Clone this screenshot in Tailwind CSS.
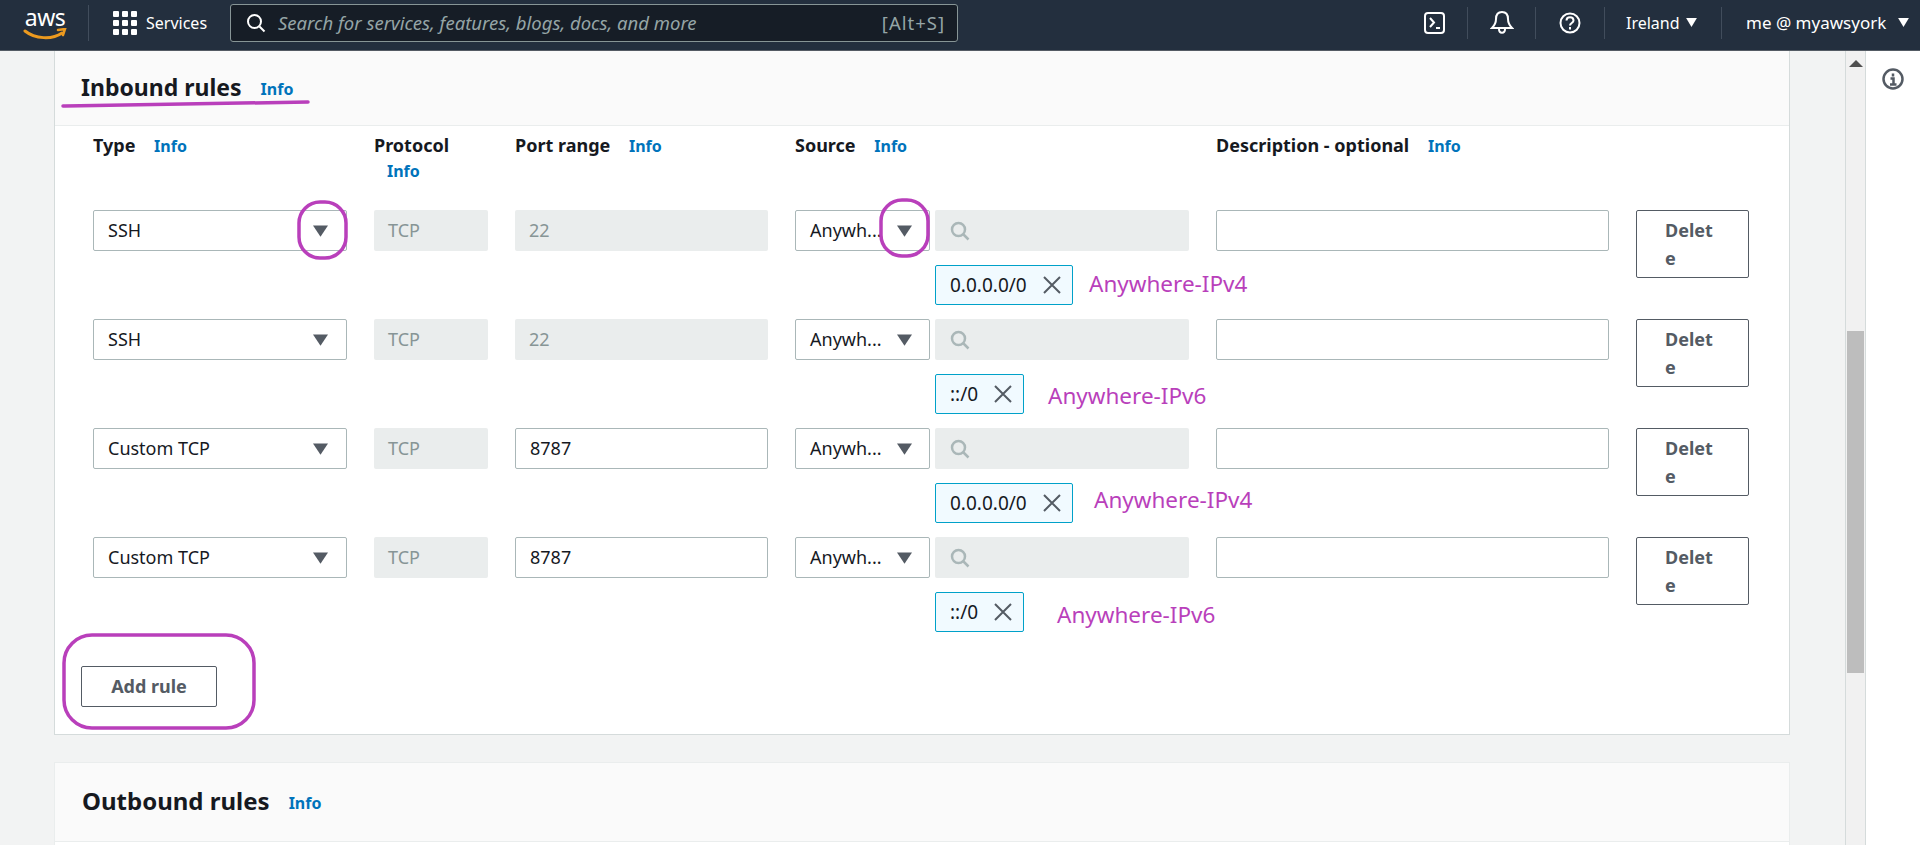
<!DOCTYPE html>
<html lang="en">
<head>
    <meta charset="UTF-8">
    <title>Inbound rules</title>
    <script src="https://cdn.jsdelivr.net/npm/@tailwindcss/browser@4"></script>
</head>
<body class="h-[845px] w-[1920px] overflow-hidden bg-[#f2f3f3] font-['Noto_Sans',sans-serif] text-[#16191f] relative">
    <!-- top nav -->
    <header class="h-[51px] bg-[#232f3e] border-b border-[#545b64] flex items-center pb-[5px] text-white">
        <div class="w-[89px] h-[36px] flex justify-center border-r border-[#414d5c] shrink-0">
            <div class="relative w-[44px] h-[36px] ml-[2px] text-center text-[23px] leading-[24px] tracking-[-0.5px]">aws
                <svg class="absolute left-0 top-[23px]" width="44" height="14" viewBox="0 0 44 14" fill="none"><path d="M2 3c10 8 27 9 37 2" stroke="#ec9a1f" stroke-width="3" stroke-linecap="round"/><path d="M35 2l7-1-2 6" stroke="#ec9a1f" stroke-width="2.5" stroke-linecap="round"/></svg>
            </div>
        </div>
        <svg class="ml-[24px] shrink-0" width="24" height="24" viewBox="0 0 24 24" fill="#fff">
            <rect x="0" y="0" width="6" height="6" rx="1"/><rect x="9" y="0" width="6" height="6" rx="1"/><rect x="18" y="0" width="6" height="6" rx="1"/>
            <rect x="0" y="9" width="6" height="6" rx="1"/><rect x="9" y="9" width="6" height="6" rx="1"/><rect x="18" y="9" width="6" height="6" rx="1"/>
            <rect x="0" y="18" width="6" height="6" rx="1"/><rect x="9" y="18" width="6" height="6" rx="1"/><rect x="18" y="18" width="6" height="6" rx="1"/>
        </svg>
        <span class="ml-[9px] w-[84px] text-[16px] shrink-0 whitespace-nowrap">Services</span>
        <div class="w-[728px] h-[38px] bg-[#161d26] border border-[#879596] rounded-[3px] flex items-center pl-[15px] pr-[12px] shrink-0">
            <svg width="20" height="20" viewBox="0 0 20 20" fill="none" stroke="#fff" stroke-width="2"><circle cx="8.5" cy="8.5" r="6.5"/><path d="M13.5 13.5l5 5"/></svg>
            <span class="ml-[12px] text-[18.5px] italic text-[#95a5a6] flex-1 whitespace-nowrap">Search for services, features, blogs, docs, and more</span>
            <span class="text-[18.5px] tracking-[1px] text-[#95a5a6] whitespace-nowrap">[Alt+S]</span>
        </div>
        <svg class="ml-[466px] shrink-0" width="21" height="24" viewBox="0 0 21 24" fill="none" stroke="#fff" stroke-width="2"><rect x="1" y="2" width="19" height="20" rx="3"/><path d="M6 7l4 4.5L6 16M12 17h4"/></svg>
        <div class="ml-[22px] w-px h-[32px] bg-[#414d5c]"></div>
        <svg class="ml-[22px] shrink-0" width="24" height="26" viewBox="0 0 24 26" fill="none" stroke="#fff" stroke-width="2"><path d="M12 2c-4 0-6 3-6 7 0 5-2 7-4 9h20c-2-2-4-4-4-9 0-4-2-7-6-7z"/><path d="M9 19c0 5 6 5 6 0"/></svg>
        <div class="ml-[21px] w-px h-[32px] bg-[#414d5c]"></div>
        <svg class="ml-[23px] shrink-0" width="22" height="22" viewBox="0 0 22 22" fill="none" stroke="#fff" stroke-width="2"><circle cx="11" cy="11" r="9.500"/><path d="M7.500 8.500c0-4.500 7-4.500 7 0 0 2.500-3.500 2.500-3.500 5"/><path d="M11 15v2.500"/></svg>
        <div class="ml-[23px] w-px h-[32px] bg-[#414d5c]"></div>
        <span class="ml-[21px] text-[16px] w-[52px] shrink-0">Ireland</span>
        <svg class="ml-[8px] shrink-0" width="11" height="9" viewBox="0 0 12 10" fill="#fff"><path d="M0 0h12L6 10z"/></svg>
        <div class="ml-[24px] w-px h-[32px] bg-[#414d5c]"></div>
        <span class="ml-[24px] text-[17px] w-[137px] shrink-0 whitespace-nowrap">me @ myawsyork</span>
        <svg class="ml-[15px] shrink-0" width="11" height="9" viewBox="0 0 12 10" fill="#fff"><path d="M0 0h12L6 10z"/></svg>
    </header>

    <div class="flex h-[794px]">
        <main class="w-[1845px] pl-[54px] pr-[55px] shrink-0 overflow-hidden">
            <!-- inbound -->
            <section class="bg-white border-x border-b border-[#d5dbdb] h-[685px] -mt-px">
                <div class="h-[76px] bg-[#fafafa] border-b border-[#eaeded] pl-[26px] pt-[23px] flex items-start">
                    <h2 class="text-[23px] leading-[28px] font-bold">Inbound rules</h2>
                    <a class="ml-[19px] mt-[6px] text-[16px] leading-[20px] font-bold text-[#0073bb]">Info</a>
                </div>
                <div class="pl-[38px]">
                    <div class="grid grid-cols-[254px_114px_253px_394px_393px_113px] gap-x-[27px] h-[84px] pt-[6px] text-[18px] leading-[26px] font-bold">
                        <div>Type <a class="ml-[14px] text-[16px] text-[#0073bb]">Info</a></div>
                        <div>Protocol <div class="ml-[13px] text-[16px] text-[#0073bb]">Info</div></div>
                        <div>Port range <a class="ml-[14px] text-[16px] text-[#0073bb]">Info</a></div>
                        <div>Source <a class="ml-[14px] text-[16px] text-[#0073bb]">Info</a></div>
                        <div class="whitespace-nowrap">Description - optional <a class="ml-[14px] text-[16px] text-[#0073bb]">Info</a></div>
                        <div></div>
                    </div>

                    <!-- row 1 -->
                    <div class="grid grid-cols-[254px_114px_253px_394px_393px_113px] gap-x-[27px] h-[109px] text-[18px]">
                        <div class="h-[41px] bg-white border border-[#aab7b8] rounded-[2px] flex items-center justify-between pl-[14px] pr-[18px]">SSH
                            <svg width="15" height="12" viewBox="0 0 16 12" fill="#545b64"><path d="M0 0h16L8 12z"/></svg></div>
                        <div class="h-[41px] bg-[#eaeded] rounded-[2px] flex items-center pl-[14px] text-[#879596]">TCP</div>
                        <div class="h-[41px] bg-[#eaeded] rounded-[2px] flex items-center pl-[14px] text-[#879596]">22</div>
                        <div>
                            <div class="flex gap-[5px]">
                                <div class="w-[135px] h-[41px] bg-white border border-[#aab7b8] rounded-[2px] flex items-center justify-between pl-[14px] pr-[17px] whitespace-nowrap overflow-hidden">Anywh...
                                    <svg class="shrink-0" width="15" height="12" viewBox="0 0 16 12" fill="#545b64"><path d="M0 0h16L8 12z"/></svg></div>
                                <div class="w-[254px] h-[41px] bg-[#eaeded] rounded-[2px] flex items-center pl-[15px]">
                                    <svg width="20" height="20" viewBox="0 0 20 20" fill="none" stroke="#aab7b8" stroke-width="2.5"><circle cx="8.5" cy="8.500" r="6.500"/><path d="M13.500 13.500l5 5"/></svg></div>
                            </div>
                            <div class="ml-[140px] mt-[14px] flex items-center">
                                <div class="w-[138px] h-[40px] shrink-0 bg-[#f1faff] border border-[#00a1c9] rounded-[2px] flex items-center justify-between pl-[14px] pr-[10px] text-[19px]">0.0.0.0/0
                                    <svg width="20" height="20" viewBox="0 0 20 20" stroke="#545b64" stroke-width="2"><path d="M2 2l16 16M18 2L2 18"/></svg></div>
                                <span class="ml-[16px] -mt-[2px] text-[22.5px] text-[#b93fbb] whitespace-nowrap">Anywhere-IPv4</span>
                            </div>
                        </div>
                        <div class="h-[41px] bg-white border border-[#aab7b8] rounded-[2px]"></div>
                        <div class="h-[68px] border border-[#545b64] rounded-[2px] pl-[28px] pt-[5px] text-[#545b64] font-bold leading-[28px]">Delet<br>e</div>
                    </div>

                    <!-- row 2 -->
                    <div class="grid grid-cols-[254px_114px_253px_394px_393px_113px] gap-x-[27px] h-[109px] text-[18px]">
                        <div class="h-[41px] bg-white border border-[#aab7b8] rounded-[2px] flex items-center justify-between pl-[14px] pr-[18px]">SSH
                            <svg width="15" height="12" viewBox="0 0 16 12" fill="#545b64"><path d="M0 0h16L8 12z"/></svg></div>
                        <div class="h-[41px] bg-[#eaeded] rounded-[2px] flex items-center pl-[14px] text-[#879596]">TCP</div>
                        <div class="h-[41px] bg-[#eaeded] rounded-[2px] flex items-center pl-[14px] text-[#879596]">22</div>
                        <div>
                            <div class="flex gap-[5px]">
                                <div class="w-[135px] h-[41px] bg-white border border-[#aab7b8] rounded-[2px] flex items-center justify-between pl-[14px] pr-[17px] whitespace-nowrap overflow-hidden">Anywh...
                                    <svg class="shrink-0" width="15" height="12" viewBox="0 0 16 12" fill="#545b64"><path d="M0 0h16L8 12z"/></svg></div>
                                <div class="w-[254px] h-[41px] bg-[#eaeded] rounded-[2px] flex items-center pl-[15px]">
                                    <svg width="20" height="20" viewBox="0 0 20 20" fill="none" stroke="#aab7b8" stroke-width="2.5"><circle cx="8.5" cy="8.500" r="6.500"/><path d="M13.500 13.500l5 5"/></svg></div>
                            </div>
                            <div class="ml-[140px] mt-[14px] flex items-center">
                                <div class="w-[89px] h-[40px] shrink-0 bg-[#f1faff] border border-[#00a1c9] rounded-[2px] flex items-center justify-between pl-[14px] pr-[10px] text-[19px]">::/0
                                    <svg width="20" height="20" viewBox="0 0 20 20" stroke="#545b64" stroke-width="2"><path d="M2 2l16 16M18 2L2 18"/></svg></div>
                                <span class="ml-[24px] mt-[4px] text-[22.5px] text-[#b93fbb] whitespace-nowrap">Anywhere-IPv6</span>
                            </div>
                        </div>
                        <div class="h-[41px] bg-white border border-[#aab7b8] rounded-[2px]"></div>
                        <div class="h-[68px] border border-[#545b64] rounded-[2px] pl-[28px] pt-[5px] text-[#545b64] font-bold leading-[28px]">Delet<br>e</div>
                    </div>

                    <!-- row 3 -->
                    <div class="grid grid-cols-[254px_114px_253px_394px_393px_113px] gap-x-[27px] h-[109px] text-[18px]">
                        <div class="h-[41px] bg-white border border-[#aab7b8] rounded-[2px] flex items-center justify-between pl-[14px] pr-[18px]">Custom TCP
                            <svg width="15" height="12" viewBox="0 0 16 12" fill="#545b64"><path d="M0 0h16L8 12z"/></svg></div>
                        <div class="h-[41px] bg-[#eaeded] rounded-[2px] flex items-center pl-[14px] text-[#879596]">TCP</div>
                        <div class="h-[41px] bg-white border border-[#aab7b8] rounded-[2px] flex items-center pl-[14px]">8787</div>
                        <div>
                            <div class="flex gap-[5px]">
                                <div class="w-[135px] h-[41px] bg-white border border-[#aab7b8] rounded-[2px] flex items-center justify-between pl-[14px] pr-[17px] whitespace-nowrap overflow-hidden">Anywh...
                                    <svg class="shrink-0" width="15" height="12" viewBox="0 0 16 12" fill="#545b64"><path d="M0 0h16L8 12z"/></svg></div>
                                <div class="w-[254px] h-[41px] bg-[#eaeded] rounded-[2px] flex items-center pl-[15px]">
                                    <svg width="20" height="20" viewBox="0 0 20 20" fill="none" stroke="#aab7b8" stroke-width="2.5"><circle cx="8.5" cy="8.500" r="6.500"/><path d="M13.500 13.500l5 5"/></svg></div>
                            </div>
                            <div class="ml-[140px] mt-[14px] flex items-center">
                                <div class="w-[138px] h-[40px] shrink-0 bg-[#f1faff] border border-[#00a1c9] rounded-[2px] flex items-center justify-between pl-[14px] pr-[10px] text-[19px]">0.0.0.0/0
                                    <svg width="20" height="20" viewBox="0 0 20 20" stroke="#545b64" stroke-width="2"><path d="M2 2l16 16M18 2L2 18"/></svg></div>
                                <span class="ml-[21px] -mt-[6px] text-[22.5px] text-[#b93fbb] whitespace-nowrap">Anywhere-IPv4</span>
                            </div>
                        </div>
                        <div class="h-[41px] bg-white border border-[#aab7b8] rounded-[2px]"></div>
                        <div class="h-[68px] border border-[#545b64] rounded-[2px] pl-[28px] pt-[5px] text-[#545b64] font-bold leading-[28px]">Delet<br>e</div>
                    </div>

                    <!-- row 4 -->
                    <div class="grid grid-cols-[254px_114px_253px_394px_393px_113px] gap-x-[27px] h-[109px] text-[18px]">
                        <div class="h-[41px] bg-white border border-[#aab7b8] rounded-[2px] flex items-center justify-between pl-[14px] pr-[18px]">Custom TCP
                            <svg width="15" height="12" viewBox="0 0 16 12" fill="#545b64"><path d="M0 0h16L8 12z"/></svg></div>
                        <div class="h-[41px] bg-[#eaeded] rounded-[2px] flex items-center pl-[14px] text-[#879596]">TCP</div>
                        <div class="h-[41px] bg-white border border-[#aab7b8] rounded-[2px] flex items-center pl-[14px]">8787</div>
                        <div>
                            <div class="flex gap-[5px]">
                                <div class="w-[135px] h-[41px] bg-white border border-[#aab7b8] rounded-[2px] flex items-center justify-between pl-[14px] pr-[17px] whitespace-nowrap overflow-hidden">Anywh...
                                    <svg class="shrink-0" width="15" height="12" viewBox="0 0 16 12" fill="#545b64"><path d="M0 0h16L8 12z"/></svg></div>
                                <div class="w-[254px] h-[41px] bg-[#eaeded] rounded-[2px] flex items-center pl-[15px]">
                                    <svg width="20" height="20" viewBox="0 0 20 20" fill="none" stroke="#aab7b8" stroke-width="2.5"><circle cx="8.5" cy="8.500" r="6.500"/><path d="M13.500 13.500l5 5"/></svg></div>
                            </div>
                            <div class="ml-[140px] mt-[14px] flex items-center">
                                <div class="w-[89px] h-[40px] shrink-0 bg-[#f1faff] border border-[#00a1c9] rounded-[2px] flex items-center justify-between pl-[14px] pr-[10px] text-[19px]">::/0
                                    <svg width="20" height="20" viewBox="0 0 20 20" stroke="#545b64" stroke-width="2"><path d="M2 2l16 16M18 2L2 18"/></svg></div>
                                <span class="ml-[33px] mt-[6px] text-[22.5px] text-[#b93fbb] whitespace-nowrap">Anywhere-IPv6</span>
                            </div>
                        </div>
                        <div class="h-[41px] bg-white border border-[#aab7b8] rounded-[2px]"></div>
                        <div class="h-[68px] border border-[#545b64] rounded-[2px] pl-[28px] pt-[5px] text-[#545b64] font-bold leading-[28px]">Delet<br>e</div>
                    </div>
                </div>
                <div class="pl-[26px] mt-[20px]">
                    <div class="w-[136px] h-[41px] border border-[#545b64] rounded-[2px] flex items-center justify-center text-[18px] font-bold text-[#545b64]">Add rule</div>
                </div>
            </section>

            <!-- outbound -->
            <section class="mt-[27px] bg-white border border-[#eaeded] h-[200px]">
                <div class="h-[79px] bg-[#fafafa] border-b border-[#eaeded] pl-[27px] pt-[24px] flex items-start">
                    <h2 class="text-[24px] leading-[28px] font-bold">Outbound rules</h2>
                    <a class="ml-[19px] mt-[6px] text-[16px] leading-[20px] font-bold text-[#0073bb]">Info</a>
                </div>
            </section>
        </main>

        <!-- scrollbar -->
        <div class="w-[21px] bg-[#f1f1f1] border-x border-[#d5dbdb] shrink-0 pt-[9px] pl-[2px]">
            <svg width="14" height="7" viewBox="0 0 14 7" fill="#505050" class="ml-px"><path d="M7 0l7 7H0z"/></svg>
            <div class="w-[17px] -ml-[1px] mt-[264px] h-[342px] bg-[#bdbdbd]"></div>
        </div>

        <!-- help rail -->
        <aside class="flex-1 bg-white flex justify-center pt-[17px]">
            <svg width="22" height="22" viewBox="0 0 22 22" fill="none" stroke="#545b64" stroke-width="2.500"><circle cx="11" cy="11" r="9.500"/><path d="M11 5.500v3M8.500 10.500H11.500V16M8 16.500h6.500"/></svg>
        </aside>
    </div>

    <!-- hand drawn annotations -->
    <svg class="absolute left-0 top-0 pointer-events-none" width="1920" height="845" viewBox="0 0 1920 845" fill="none" stroke="#b93fbb" stroke-width="3.500" stroke-linecap="round">
        <path d="M63 106c80-2 160-2 245-4"/>
        <rect x="299" y="202" width="47" height="56" rx="21"/>
        <rect x="881" y="200" width="47" height="56" rx="21"/>
        <rect x="64" y="635" width="190" height="93" rx="28"/>
    </svg>
</body>
</html>
